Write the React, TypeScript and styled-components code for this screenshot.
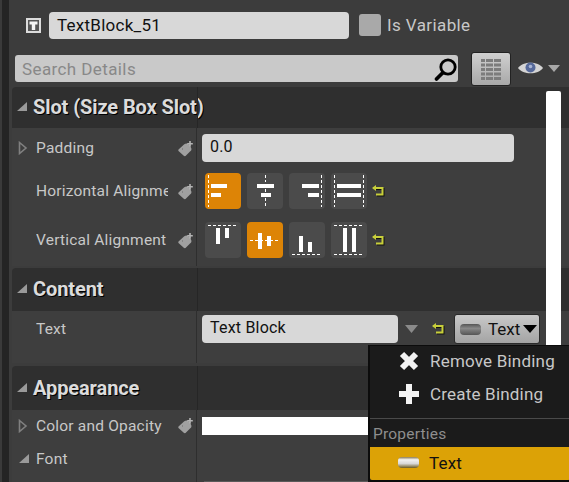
import React from "react";
import styled, { createGlobalStyle } from "styled-components";

const Global = createGlobalStyle`
  html, body { margin: 0; padding: 0; background: #3c3c3c; }
  body { font-family: Roboto, "Liberation Sans", sans-serif; overflow: hidden; }
`;

const Page = styled.div`
  position: relative;
  width: 569px;
  height: 482px;
  overflow: hidden;
  background: #3c3c3c;
  border-left: 2px solid #3a3a3a;
  box-sizing: border-box;
  display: flex;
`;
const LeftEdge = styled.div`
  width: 7px;
  flex: none;
  background: #242424;
`;
const Main = styled.div`
  flex: 1;
  min-width: 0;
  display: flex;
  flex-direction: column;
`;
const NameBar = styled.div`
  height: 52px;
  flex: none;
  display: flex;
  align-items: flex-start;
  padding: 12px 0 0 17px;
  box-sizing: border-box;
`;
const TypeIcon = styled.svg`
  margin: 6px 8px 0 0;
  flex: none;
`;
const NameInput = styled.div`
  width: 300px;
  height: 27px;
  box-sizing: border-box;
  flex: none;
  background: #d8d8d8;
  border-radius: 4px;
  padding-left: 8px;
  font-size: 17px;
  line-height: 27px;
  letter-spacing: 0.25px;
  color: #111;
`;
const CheckBox = styled.div`
  width: 22px;
  height: 22px;
  margin: 2px 6px 0 10px;
  flex: none;
  background: #a9a9a9;
  border-radius: 3px;
`;
const CheckLabel = styled.div`
  font-size: 17px;
  line-height: 27px;
  letter-spacing: 0.4px;
  color: #c8c8c8;
`;
const SearchBar = styled.div`
  height: 35px;
  flex: none;
  display: flex;
  align-items: flex-start;
  padding-left: 6px;
`;
const SearchInput = styled.div`
  width: 443px;
  height: 27px;
  margin-top: 3px;
  flex: none;
  background: #c9c9c9;
  border-radius: 3px;
  padding: 0 0 0 7px;
  box-sizing: border-box;
  display: flex;
  align-items: center;
  justify-content: space-between;
  font-size: 17px;
  letter-spacing: 0.4px;
  color: #888;
`;
const GridButton = styled.div`
  width: 40px;
  height: 34px;
  margin-left: 13px;
  flex: none;
  box-sizing: border-box;
  border: 1px solid #222;
  border-radius: 3px;
  background: linear-gradient(#d0d0d0, #a8a8a8);
  display: flex;
  align-items: center;
  justify-content: center;
`;
const EyeGroup = styled.div`
  margin: 8px 0 0 6px;
  display: flex;
  align-items: center;
  gap: 4px;
`;
const Panel = styled.div`
  margin-left: 3px;
  display: flex;
  flex-direction: column;
  flex: 1;
`;
const Section = styled.section<{ $gap: number }>`
  margin-bottom: ${(p) => p.$gap}px;
`;
const Header = styled.div<{ $h: number }>`
  height: ${(p) => p.$h}px;
  display: flex;
  align-items: center;
  background: #2f2f2f;
  border-radius: 4px 0 0 0;
  padding: 0 0 1px 4px;
  box-sizing: border-box;
  position: relative;
`;
const HeaderSplit = styled.div`
  position: absolute;
  left: 185px;
  top: 0;
  bottom: 0;
  width: 1px;
  background: #262626;
`;
const HeaderText = styled.div`
  margin-left: 5px;
  font-size: 20px;
  font-weight: 700;
  letter-spacing: -0.1px;
  color: #dcdcdc;
  text-shadow: 1px 1px 0 #000;
`;
const Row = styled.div<{ $h: number }>`
  height: ${(p) => p.$h}px;
  display: flex;
  background: #3e3e3e;
`;
const NameCell = styled.div<{ $bottom: number }>`
  width: 185px;
  flex: none;
  box-sizing: border-box;
  border-right: 1px solid #2e2e2e;
  display: flex;
  align-items: center;
  padding: 0 0 ${(p) => p.$bottom}px 6px;
`;
const ExpandSlot = styled.div`
  width: 18px;
  flex: none;
  display: flex;
  align-items: center;
`;
const PropLabel = styled.div`
  width: 132px;
  flex: none;
  overflow: hidden;
  white-space: nowrap;
  font-size: 15.5px;
  letter-spacing: 0.2px;
  color: #c8c8c8;
`;
const ValueCell = styled.div<{ $bottom: number }>`
  flex: 1;
  box-sizing: border-box;
  display: flex;
  align-items: center;
  padding: 0 0 ${(p) => p.$bottom}px 5px;
  min-width: 0;
`;
const ValueInput = styled.div<{ $w: number }>`
  width: ${(p) => p.$w}px;
  height: 28px;
  flex: none;
  box-sizing: border-box;
  background: #d8d8d8;
  border-radius: 4px;
  padding-left: 8px;
  font-size: 16px;
  line-height: 26px;
  letter-spacing: 0.2px;
  color: #111;
`;
const ButtonStrip = styled.div`
  display: flex;
  align-items: center;
  gap: 6px;
  margin-left: 3px;
`;
const AlignButton = styled.div<{ $on?: boolean }>`
  width: 36px;
  height: 36px;
  border-radius: 4px;
  background: ${(p) => (p.$on ? "#dd8406" : "#4b4b4b")};
  flex: none;
`;
const ColorBar = styled.div`
  width: 167px;
  height: 18px;
  background: #fff;
  flex: none;
`;
const FontValueEdge = styled.div`
  align-self: flex-end;
  width: 164px;
  height: 1px;
  margin-left: 2px;
  background: #5a5a5a;
`;
const TextTrail = styled.div`
  display: flex;
  align-items: center;
`;
const BindButton = styled.div`
  width: 86px;
  height: 30px;
  margin-left: 9px;
  box-sizing: border-box;
  border-radius: 3px;
  border: 1px solid #2a2a2a;
  background: linear-gradient(#c8c8c8, #a4a4a4);
  display: flex;
  align-items: center;
  padding-left: 5px;
  font-size: 17px;
  color: #111;
`;
const BindLabel = styled.span`
  margin-left: 7px;
`;
const Pill = styled.div<{ $bright?: boolean }>`
  width: 21px;
  height: 11px;
  border-radius: 4px;
  flex: none;
  background: ${(p) =>
    p.$bright
      ? "linear-gradient(#8a7a55 0, #f2f2f2 25%, #d8d8d8 60%, #6b5b20 100%)"
      : "linear-gradient(#555, #888 40%, #555)"};
`;
const Scrollbar = styled.div`
  position: absolute;
  left: 544px;
  top: 91px;
  width: 15px;
  height: 260px;
  background: #fff;
  border-radius: 2px;
`;
const Menu = styled.div`
  position: absolute;
  left: 366px;
  top: 345px;
  width: 203px;
  height: 137px;
  box-sizing: border-box;
  border: 2px solid #0c0c0c;
  border-top-width: 1px;
  border-right-width: 1px;
  background: #1b1b1b;
  display: flex;
  flex-direction: column;
`;
const MenuItem = styled.div<{ $active?: boolean }>`
  height: 33px;
  flex: none;
  box-sizing: border-box;
  display: flex;
  align-items: center;
  padding: 0 0 ${(p) => (p.$active ? 2 : 3)}px 28px;
  gap: 10px;
  font-size: 17px;
  letter-spacing: 0.2px;
  color: ${(p) => (p.$active ? "#111" : "#c8c8c8")};
  background: ${(p) => (p.$active ? "#dca206" : "transparent")};
  border-radius: ${(p) => (p.$active ? "0 0 2px 2px" : "0")};
`;
const MenuRule = styled.div`
  height: 1px;
  margin-top: 6px;
  background: #4a4a4a;
`;
const MenuHeading = styled.div`
  height: 28px;
  padding-left: 3px;
  line-height: 31px;
  font-size: 15.5px;
  letter-spacing: 0.2px;
  color: #8e8e8e;
`;
const DropArrow = styled.svg`
  margin: 0 0 0 7px;
  flex: none;
`;
const Undo = styled.svg<{ $ml: number }>`
  margin-left: ${(p) => p.$ml}px;
  flex: none;
`;
const CaretBlack = styled.svg`
  margin-left: 3px;
  flex: none;
`;
const TagIcon = styled.svg`
  flex: none;
  margin-left: 9px;
`;

const Collapse = () => (
  <svg width="12" height="10" viewBox="0 0 12 10">
    <polygon points="11,0 11,9 1,9" fill="#9a9a9a" />
  </svg>
);
const Expand = () => (
  <svg width="10" height="14" viewBox="0 0 10 14">
    <polygon points="1.5,1.5 8,7 1.5,12.5" fill="none" stroke="#808080" strokeWidth="1.6" />
  </svg>
);
const Tag = () => (
  <TagIcon width="17" height="17" viewBox="0 0 17 17">
    <path d="M1.5 9.5L7 4.5Q8 3.5 10 3.5L13 5L14.5 9Q14.5 10.5 13 11.5L8.5 16Q7.5 16.5 6.5 15.5L1.5 11Q1 10 1.5 9.5Z" fill="#a0a0a0" />
    <path d="M13 1v5.5M10.2 3.7h5.6" stroke="#b4b4b4" strokeWidth="1.6" />
    <path d="M5 9h1" stroke="#6a6a6a" strokeWidth="1" />
  </TagIcon>
);
const UndoArrow = ({ ml }: { ml: number }) => (
  <Undo $ml={ml} width="13" height="12" viewBox="0 0 13 12">
    <path d="M1 3h9.5v6.5H4" fill="none" stroke="#111" strokeWidth="2" transform="translate(1 1)" />
    <path d="M1 3h9.5v6.5H4" fill="none" stroke="#c8cf3a" strokeWidth="2" />
    <polygon points="4,0 4,6 0,3" fill="#c8cf3a" />
  </Undo>
);

type Kind = "hl" | "hc" | "hr" | "hf" | "vt" | "vc" | "vb" | "vf";
const Dash = ({ d }: { d: string }) => (
  <path d={d} stroke="#fff" strokeWidth="1" strokeDasharray="3 2" fill="none" />
);
const Glyph = ({ kind }: { kind: Kind }) => {
  const bars: Record<Kind, [number, number, number, number][]> = {
    hl: [[6, 11, 16, 4], [6, 20, 10, 4]],
    hc: [[10, 11, 17, 4], [14, 20, 10, 4]],
    hr: [[13, 11, 17, 4], [19, 20, 11, 4]],
    hf: [[6, 11, 24, 4], [6, 20, 24, 4]],
    vt: [[11, 6, 4, 16], [20, 6, 4, 10]],
    vc: [[11, 11, 4, 16], [20, 14, 4, 10]],
    vb: [[10, 14, 4, 16], [19, 20, 4, 10]],
    vf: [[12, 6, 4, 24], [21, 6, 4, 24]],
  };
  const lines: Record<Kind, string[]> = {
    hl: ["M3.5 2V34"],
    hc: ["M18.5 2V9", "M18.5 16V19", "M18.5 25V34"],
    hr: ["M32.5 2V34"],
    hf: ["M3.5 2V34", "M32.5 2V34"],
    vt: ["M3 3.5H33"],
    vc: ["M3 18.5H33"],
    vb: ["M3 32.5H33"],
    vf: ["M3 3.5H33", "M3 32.5H33"],
  };
  return (
    <svg width="36" height="36" viewBox="0 0 36 36">
      {lines[kind].map((d) => (
        <Dash key={d} d={d} />
      ))}
      {bars[kind].map(([x, y, w, h], i) => (
        <rect key={i} x={x} y={y} width={w} height={h} fill="#fff" />
      ))}
    </svg>
  );
};

const Prop = ({ label, expand, tag, h, labelBottom = 0, valueBottom = 0, children }: {
  label: string; expand?: "open" | "closed"; tag?: boolean; h: number;
  labelBottom?: number; valueBottom?: number; children?: React.ReactNode;
}) => (
  <Row $h={h}>
    <NameCell $bottom={labelBottom}>
      <ExpandSlot>
        {expand === "closed" && <Expand />}
        {expand === "open" && <Collapse />}
      </ExpandSlot>
      <PropLabel>{label}</PropLabel>
      {tag && <Tag />}
    </NameCell>
    <ValueCell $bottom={valueBottom}>{children}</ValueCell>
  </Row>
);

const Head = ({ title, h }: { title: string; h: number }) => (
  <Header $h={h}>
    <Collapse />
    <HeaderText>{title}</HeaderText>
    <HeaderSplit />
  </Header>
);

export default function App() {
  return (
    <Page>
      <Global />
      <LeftEdge />
      <Main>
        <NameBar>
          <TypeIcon width="15" height="15" viewBox="0 0 15 15">
            <rect x="1" y="1" width="13" height="13" fill="#555" stroke="#dcdcdc" strokeWidth="2" />
            <path d="M3.5 3.5h8v3H9.2V12H5.8V6.5H3.5z" fill="#f4f4f4" />
          </TypeIcon>
          <NameInput>TextBlock_51</NameInput>
          <CheckBox />
          <CheckLabel>Is Variable</CheckLabel>
        </NameBar>
        <SearchBar>
          <SearchInput>
            Search Details
            <svg width="25" height="26" viewBox="0 0 25 26">
              <circle cx="15" cy="11" r="7.2" fill="none" stroke="#000" strokeWidth="2.8" />
              <path d="M9.5 17l-6 6" stroke="#000" strokeWidth="3.8" strokeLinecap="round" />
            </svg>
          </SearchInput>
          <GridButton>
            <svg width="20" height="22" viewBox="0 0 20 22">
              {[1, 5.5, 10, 14.5, 19].map((y) => (
                <g key={y} fill="#7c7c7c">
                  <rect x="0" y={y} width="4" height="3" />
                  <rect x="5" y={y} width="7" height="3" />
                  <rect x="13" y={y} width="7" height="3" />
                </g>
              ))}
            </svg>
          </GridButton>
          <EyeGroup>
            <svg width="27" height="16" viewBox="0 0 27 16">
              <path d="M1 8C6 1 21 1 26 8C21 15 6 15 1 8Z" fill="#d4d4d4" />
              <circle cx="13.5" cy="7.5" r="5" fill="#56699a" />
              <circle cx="13.5" cy="6.5" r="1.8" fill="#a8b4d4" />
            </svg>
            <svg width="12" height="7" viewBox="0 0 12 7">
              <polygon points="0,0 12,0 6,7" fill="#a8a8a8" />
            </svg>
          </EyeGroup>
        </SearchBar>
        <Panel>
          <Section $gap={2}>
            <Head title="Slot (Size Box Slot)" h={41} />
            <Prop label="Padding" expand="closed" tag h={40}>
              <ValueInput $w={312}>0.0</ValueInput>
            </Prop>
            <Prop label="Horizontal Alignment" tag h={46}>
              <ButtonStrip>
                <AlignButton $on><Glyph kind="hl" /></AlignButton>
                <AlignButton><Glyph kind="hc" /></AlignButton>
                <AlignButton><Glyph kind="hr" /></AlignButton>
                <AlignButton><Glyph kind="hf" /></AlignButton>
              </ButtonStrip>
              <UndoArrow ml={5} />
            </Prop>
            <Prop label="Vertical Alignment" tag h={52}>
              <ButtonStrip>
                <AlignButton><Glyph kind="vt" /></AlignButton>
                <AlignButton $on><Glyph kind="vc" /></AlignButton>
                <AlignButton><Glyph kind="vb" /></AlignButton>
                <AlignButton><Glyph kind="vf" /></AlignButton>
              </ButtonStrip>
              <UndoArrow ml={5} />
            </Prop>
          </Section>
          <Section $gap={3}>
            <Head title="Content" h={43} />
            <Prop label="Text" h={52} labelBottom={16} valueBottom={16}>
              <TextTrail>
                <ValueInput $w={196}>Text Block</ValueInput>
                <DropArrow width="13" height="8" viewBox="0 0 13 8">
                  <polygon points="0,0 13,0 6.5,8" fill="#8a8a8a" />
                </DropArrow>
                <UndoArrow ml={14} />
                <BindButton>
                  <Pill />
                  <BindLabel>Text</BindLabel>
                  <CaretBlack width="14" height="8" viewBox="0 0 14 8">
                    <polygon points="0,0 14,0 7,8" fill="#000" />
                  </CaretBlack>
                </BindButton>
              </TextTrail>
            </Prop>
          </Section>
          <Section $gap={0}>
            <Head title="Appearance" h={44} />
            <Prop label="Color and Opacity" expand="closed" tag h={34} labelBottom={3} valueBottom={2}>
              <ColorBar />
            </Prop>
            <Prop label="Font" expand="open" h={38} labelBottom={8}>
              <FontValueEdge />
            </Prop>
          </Section>
        </Panel>
      </Main>
      <Scrollbar />
      <Menu>
        <MenuItem>
          <svg width="22" height="22" viewBox="0 0 22 22">
            <path d="M4 4L18 18M18 4L4 18" stroke="#f2f2f2" strokeWidth="6" />
          </svg>
          Remove Binding
        </MenuItem>
        <MenuItem>
          <svg width="22" height="22" viewBox="0 0 22 22">
            <path d="M11 1V21M1 11H21" stroke="#f4f4f4" strokeWidth="6" />
          </svg>
          Create Binding
        </MenuItem>
        <MenuRule />
        <MenuHeading>Properties</MenuHeading>
        <MenuItem $active>
          <Pill $bright />
          Text
        </MenuItem>
      </Menu>
    </Page>
  );
}
